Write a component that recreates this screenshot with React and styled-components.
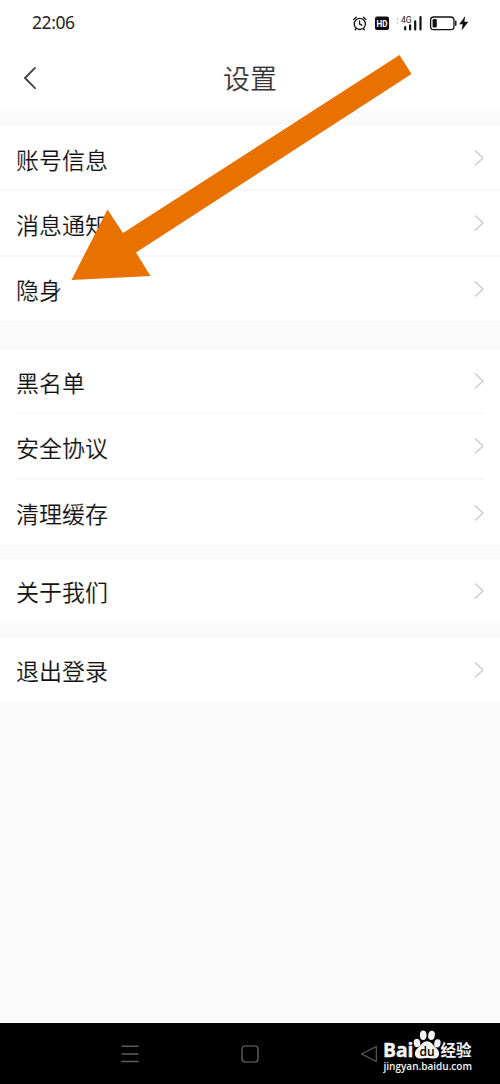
import React from "react";
import styled, { createGlobalStyle } from "styled-components";

const GlobalStyle = createGlobalStyle`
  body {
    margin: 0;
    background: #fafafa;
    font-family: "Noto Sans CJK SC", sans-serif;
  }
`;

const Screen = styled.div`
  position: relative;
  display: flex;
  flex-direction: column;
  width: 500px;
  height: 1084px;
  overflow: hidden;
  background: #fafafa;
`;

const StatusBar = styled.div`
  display: flex;
  align-items: center;
  justify-content: space-between;
  height: 45px;
  padding: 0 31px 0 32px;
  background: #fff;
`;

const Clock = styled.span`
  font: 17.5px/45px "Noto Sans", sans-serif;
  letter-spacing: -0.4px;
  color: #222;
`;

const Header = styled.header`
  display: grid;
  grid-template-columns: 60px 1fr 60px;
  align-items: center;
  height: 66px;
  background: #fff;
`;

const BackButton = styled.button`
  display: flex;
  padding: 0 0 1px 22px;
  border: 0;
  background: none;
`;

const Title = styled.h1`
  margin: 0;
  font-size: 27px;
  line-height: 66px;
  font-weight: 400;
  text-align: center;
  color: #333;
  -webkit-text-stroke: 0.2px #fff;
`;

const Group = styled.section`
  margin-top: ${(p) => p.$gap}px;
  background: #fff;
`;

const Row = styled.div`
  display: flex;
  align-items: center;
  justify-content: space-between;
  box-sizing: border-box;
  height: ${(p) => p.$height}px;
  margin: 0 ${(p) => (p.$inset ? 16 : 0)}px;
  padding: 0 ${(p) => (p.$inset ? 0 : 16)}px;
  border-bottom: ${(p) => (p.$last ? "0" : "2px solid #f7f7f7")};
`;

// the thin white stroke takes the regular weight down a little
const Label = styled.span`
  padding-top: ${(p) => (p.$last ? 0 : 2)}px;
  font-size: 23px;
  line-height: 60px;
  color: #111;
  -webkit-text-stroke: 0.15px #fff;
`;

const NavBar = styled.nav`
  display: grid;
  grid-template-columns: 70px 120px 120px 118px;
  align-items: center;
  height: 61px;
  margin-top: auto;
  background: #000;
`;

const NavItem = styled.div`
  display: flex;
  justify-content: center;
`;

const Watermark = styled.div`
  position: absolute;
  left: 383px;
  top: 1026px;
  color: #f4f4f4;
`;

const Arrow = styled.svg`
  position: absolute;
  left: 0;
  top: 0;
  pointer-events: none;
`;

const groups = [
  { gap: 15, heights: [65, 66, 64], rows: ["账号信息", "消息通知", "隐身"] },
  { gap: 29, inset: true, heights: [64, 66, 65], rows: ["黑名单", "安全协议", "清理缓存"] },
  { gap: 14, heights: [64], rows: ["关于我们"] },
  { gap: 15, heights: [64], rows: ["退出登录"] },
];

const StatusIcons = () => (
  <svg width="118" height="22" viewBox="351 11 118 22">
    <g fill="none" stroke="#111" strokeWidth="1.3" strokeLinecap="round">
      <circle cx="359.8" cy="22.9" r="5.6" />
      <path d="M359.6 20v3.2l2.2 1M353.7 18.4l2.5-2.2M365.9 18.4l-2.5-2.2M356.2 27.5l-1 1.3M363.4 27.5l1 1.3" />
    </g>
    <rect x="375" y="15.5" width="14" height="13.6" rx="2" fill="#0c0c0c" />
    <text x="382" y="25.6" fill="#fff" fontFamily="Roboto" fontWeight="700" fontSize="9" textAnchor="middle" textLength="11" lengthAdjust="spacingAndGlyphs">HD</text>
    <path d="M397.5 17v2M397.5 20.5v2" stroke="#ccc" strokeWidth="1.5" />
    <text x="401" y="22" fill="#222" fontFamily="Roboto" fontSize="8.5">4G</text>
    <path d="M405.2 26v2.4M410.1 24.4v4M415.2 20.4v8M420.5 16v12.4" stroke="#111" strokeWidth="2.2" strokeLinecap="round" />
    <rect x="430.6" y="16" width="23.4" height="12.6" rx="3.2" fill="none" stroke="#111" strokeWidth="1.3" />
    <rect x="432.6" y="18" width="4.2" height="8.6" rx="1.3" fill="#111" />
    <path d="M455.8 20.3v4" stroke="#111" strokeWidth="1.4" strokeLinecap="round" />
    <path d="M465.2 15l-6 8.2h3.4l-1 6.4 6.8-8.8h-4z" fill="#111" />
  </svg>
);

const BackIcon = () => (
  <svg width="16" height="26" viewBox="0 0 16 26">
    <path d="M13 2.9L3 13l10 10.1" fill="none" stroke="#444" strokeWidth="1.9" strokeLinecap="round" strokeLinejoin="round" />
  </svg>
);

const Chevron = () => (
  <svg width="10" height="18" viewBox="0 0 10 18">
    <path d="M1 1.5L9 9 1 16.5" fill="none" stroke="#cdcdcd" strokeWidth="1.5" />
  </svg>
);

const BaiduMark = () => (
  <svg width="95" height="56" viewBox="383 1026 95 56" fill="currentColor">
    <text x="383" y="1057" fontFamily="Open Sans" fontWeight="700" fontSize="19" textLength="30.5" lengthAdjust="spacingAndGlyphs" stroke="currentColor" strokeWidth="0.4">Bai</text>
    <ellipse cx="417" cy="1043" rx="3.3" ry="4.2" transform="rotate(-12 417 1043)" />
    <ellipse cx="423.2" cy="1035.3" rx="3.3" ry="4.7" />
    <ellipse cx="431.5" cy="1035.4" rx="3.3" ry="4.6" transform="rotate(10 431.5 1035.4)" />
    <ellipse cx="437.4" cy="1043.3" rx="3.2" ry="4.1" transform="rotate(12 437.4 1043.3)" />
    <path d="M427 1041.3c4 0 5.6 3.3 7.8 5.5 2.4 2.2 4.3 3.7 4.3 6.6 0 3.3-2.3 5.2-5.5 5.2-2.5 0-4.1-.6-6.6-.6s-4.1.6-6.6.6c-3.2 0-5.5-1.9-5.5-5.2 0-2.9 1.9-4.4 4.3-6.6 2.2-2.2 3.8-5.5 7.8-5.5z" />
    <text x="427" y="1055.8" fill="#000" fontFamily="Open Sans" fontWeight="600" fontSize="12" textAnchor="middle">du</text>
    <text x="440.5" y="1056.3" fontFamily="Noto Sans CJK SC" fontWeight="700" fontSize="15.5">经验</text>
    <text x="383.5" y="1069.7" fontFamily="Open Sans" fontWeight="600" fontSize="10.5" textLength="88.5" lengthAdjust="spacingAndGlyphs">jingyan.baidu.com</text>
  </svg>
);

export default function App() {
  return (
    <Screen>
      <GlobalStyle />
      <StatusBar>
        <Clock>22:06</Clock>
        <StatusIcons />
      </StatusBar>
      <Header>
        <BackButton aria-label="返回"><BackIcon /></BackButton>
        <Title>设置</Title>
      </Header>
      {groups.map((group) => (
        <Group key={group.rows[0]} $gap={group.gap}>
          {group.rows.map((label, i) => {
            const last = i === group.rows.length - 1;
            return (
              <Row key={label} $inset={group.inset} $height={group.heights[i]} $last={last}>
                <Label $last={last}>{label}</Label>
                <Chevron />
              </Row>
            );
          })}
        </Group>
      ))}
      <NavBar>
        <span />
        <NavItem>
          <svg width="20" height="20" viewBox="0 0 20 20">
            <path d="M1.5 2.2h17M1.5 10h17M1.5 17.5h17" stroke="#5c5c5c" strokeWidth="1.4" />
          </svg>
        </NavItem>
        <NavItem>
          <svg width="20" height="20" viewBox="0 0 20 20">
            <rect x="2" y="2" width="16" height="16" rx="3" fill="none" stroke="#707070" strokeWidth="1.2" />
          </svg>
        </NavItem>
        <NavItem>
          <svg width="20" height="20" viewBox="0 0 20 20">
            <path d="M17.3 2.5v15L2.5 10z" fill="none" stroke="#606060" strokeWidth="1.1" strokeLinejoin="round" />
          </svg>
        </NavItem>
      </NavBar>
      <Watermark><BaiduMark /></Watermark>
      <Arrow width="500" height="300" viewBox="0 0 500 300">
        <path d="M71.5 280L107.5 209.5L123 233 399.5 55 411.5 74 136 252.5 150.5 276z" fill="#e97100" />
      </Arrow>
    </Screen>
  );
}
